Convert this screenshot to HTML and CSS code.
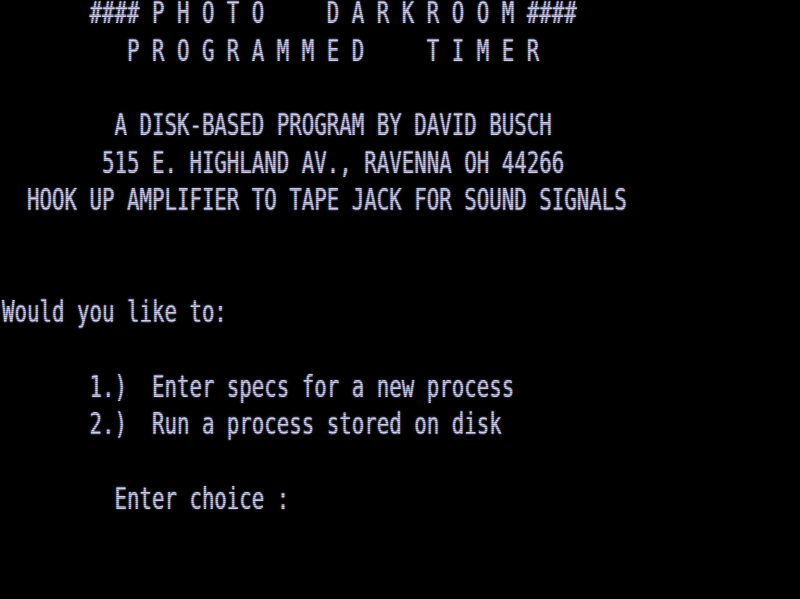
FILE: index.html
```html
<!DOCTYPE html>
<html lang="en">
<head>
    <meta charset="UTF-8">
    <meta name="viewport" content="width=device-width, initial-scale=1">
    <title>Photo Darkroom Programmed Timer</title>
    <link rel="stylesheet" href="styles.css">
</head>
<body>
    <div class="screen">
<pre class="crt">       #### P H O T O     D A R K R O O M ####
          P R O G R A M M E D     T I M E R

         A DISK-BASED PROGRAM BY DAVID BUSCH
        515 E. HIGHLAND AV., RAVENNA OH 44266
  HOOK UP AMPLIFIER TO TAPE JACK FOR SOUND SIGNALS


Would you like to:

       1.)  Enter specs for a new process
       2.)  Run a process stored on disk

         Enter choice :</pre>
    </div>
</body>
</html>
```

FILE: styles.css
```css
:root {
    --bg: #000;
    --phosphor: #d0d0ec;
    --glow: rgba(170, 170, 230, 0.55);
}
body {
    background: var(--bg);
    margin: 0;
}
/* 64 x 16 character screen, cells are 12.5 x 37.4 px */
.screen {
    position: relative;
    width: 800px;
    height: 599px;
    overflow: hidden;
    background: var(--bg);
}
.crt {
    margin: 0;
    color: var(--phosphor);
    font-family: 'DejaVu Sans Mono', 'Liberation Mono', monospace;
    font-size: 20.76px;
    line-height: 25.64px;
    white-space: pre;
    text-shadow: 0 0 2px var(--glow), 0 0 1px var(--glow);
    transform: translate(2px, -5px) scaleY(1.46);
    transform-origin: 0 0;
}
/* faint raster lines over the tube */
.screen::after {
    content: '';
    position: absolute;
    inset: 0;
    background: repeating-linear-gradient(
        to bottom,
        rgba(0, 0, 0, 0) 0,
        rgba(0, 0, 0, 0) 1px,
        rgba(0, 0, 0, 0.28) 1px,
        rgba(0, 0, 0, 0.28) 2px
    );
    pointer-events: none;
}
```
